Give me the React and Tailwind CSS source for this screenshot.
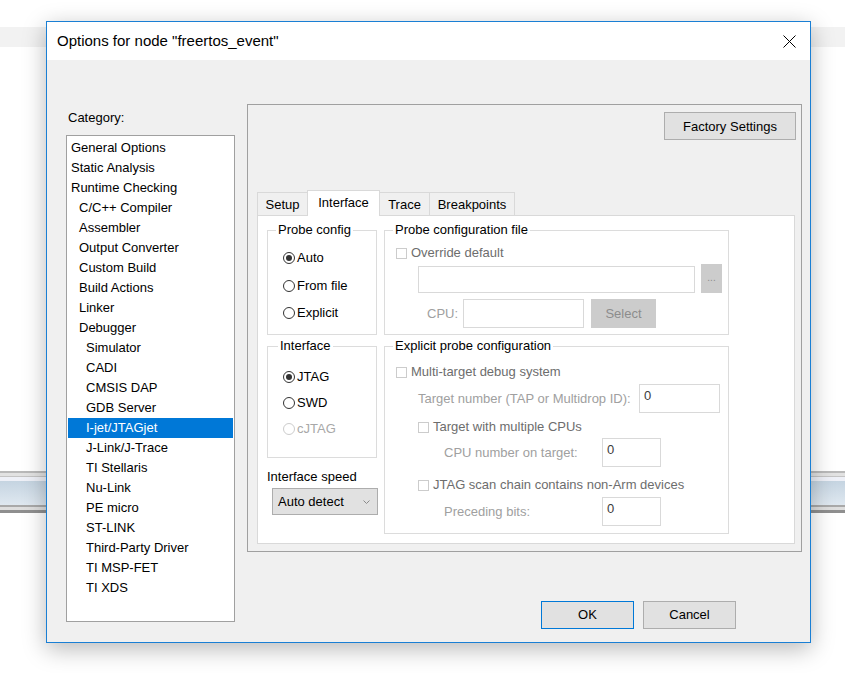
const categories = [
  ['General Options', 0],
  ['Static Analysis', 0],
  ['Runtime Checking', 0],
  ['C/C++ Compiler', 1],
  ['Assembler', 1],
  ['Output Converter', 1],
  ['Custom Build', 1],
  ['Build Actions', 1],
  ['Linker', 1],
  ['Debugger', 1],
  ['Simulator', 2],
  ['CADI', 2],
  ['CMSIS DAP', 2],
  ['GDB Server', 2],
  ['I-jet/JTAGjet', 2],
  ['J-Link/J-Trace', 2],
  ['TI Stellaris', 2],
  ['Nu-Link', 2],
  ['PE micro', 2],
  ['ST-LINK', 2],
  ['Third-Party Driver', 2],
  ['TI MSP-FET', 2],
  ['TI XDS', 2],
];

const indent = ['pl-[3px]', 'pl-[11px]', 'pl-[18px]'];

function Radio({ label, checked, disabled }) {
  return (
    <div className="flex h-4 items-center gap-[2px]">
      <span
        className={`flex h-[12px] w-[12px] items-center justify-center rounded-full border bg-white ${
          disabled ? 'border-[#cccccc]' : 'border-[#333333]'
        }`}
      >
        {checked && <span className="h-[6px] w-[6px] rounded-full bg-[#333333]" />}
      </span>
      <span className={disabled ? 'text-[#a8a8a8]' : 'text-black'}>{label}</span>
    </div>
  );
}

function Check({ label, className = '' }) {
  return (
    <div className={`flex h-4 items-center ${className}`}>
      <span className="mr-[4px] h-[11px] w-[11px] border border-[#cccccc] bg-white" />
      <span className="text-[#6d6d6d]">{label}</span>
    </div>
  );
}

function Group({ label, className = '', legend = 'ml-[8px]', children }) {
  return (
    <fieldset className={`border border-[#dcdcdc] ${className}`}>
      <legend className={`${legend} px-[2px] leading-4`}>{label}</legend>
      {children}
    </fieldset>
  );
}

function Field({ value = '', className = '' }) {
  return (
    <div className={`flex items-center border border-[#d9d9d9] bg-white pl-[4px] text-[#3c3c3c] ${className}`}>
      {value}
    </div>
  );
}

function Tab({ label, active, className = '' }) {
  return active ? (
    <div className={`relative z-10 -mb-px flex h-[26px] items-start justify-center border border-b-0 border-[#d9d9d9] bg-white pt-[4px] ${className}`}>
      {label}
    </div>
  ) : (
    <div className={`flex h-[23px] items-center justify-center border border-b-0 border-[#d9d9d9] bg-[#f0f0f0] pt-px ${className}`}>
      {label}
    </div>
  );
}

export default function App() {
  return (
    <div className="relative h-[673px] w-[845px] overflow-hidden bg-white font-['Liberation_Sans',Arial,sans-serif] text-[13px] leading-4 text-black">
      {/* background windows */}
      <div className="absolute left-0 top-[27px] h-[20px] w-full bg-[#f2f2f2]" />
      <div className="absolute left-0 top-[471px] flex w-full flex-col">
        <div className="h-[2px] bg-[#b9b9b9]" />
        <div className="h-[3px] bg-[#e2e2e2]" />
        <div className="h-px bg-[#c4c4c4]" />
        <div className="h-[4px] bg-[#eef0f7]" />
        <div className="h-[24px] bg-gradient-to-b from-[#c5d4e1] to-[#dfe8f0]" />
        <div className="h-[2px] bg-[#a9a9a9]" />
        <div className="h-[3px] bg-[#dedede]" />
        <div className="h-[3px] bg-[#8f8f8f]" />
      </div>

      {/* dialog */}
      <div className="absolute left-[46px] top-[21px] flex h-[622px] w-[765px] flex-col border border-[#1a7fd4] bg-[#f0f0f0] shadow-[0_6px_22px_rgba(0,0,0,0.28)]">
        <div className="flex h-[38px] items-center justify-between bg-white pl-[10px] pr-[14px]">
          <span className="text-[15px]">Options for node "freertos_event"</span>
          <svg width="13" height="13" viewBox="0 0 13 13" className="text-black">
            <path d="M0.5 0.5 L12.5 12.5 M12.5 0.5 L0.5 12.5" stroke="currentColor" strokeWidth="1" fill="none" />
          </svg>
        </div>

        <div className="flex flex-1">
          {/* category list */}
          <div className="ml-[19px] flex w-[169px] flex-col pt-[50px]">
            <div className="pl-[2px]">Category:</div>
            <div className="mt-[9px] h-[487px] border border-[#a0a0a0] bg-white px-px pt-[2px]">
              {categories.map(([name, level]) => {
                const sel = name === 'I-jet/JTAGjet';
                return (
                  <div
                    key={name}
                    className={`h-5 leading-5 ${indent[level]} ${sel ? 'bg-[#0078d7] text-white' : ''}`}
                  >
                    {name}
                  </div>
                );
              })}
            </div>
          </div>

          {/* right side */}
          <div className="ml-[12px] flex w-[555px] flex-col pt-[44px]">
            <div className="flex h-[448px] flex-col border border-[#a0a0a0]">
              <div className="flex justify-end pr-[5px] pt-[7px]">
                <button className="h-[28px] w-[132px] border border-[#adadad] bg-[#e1e1e1] pt-px">Factory Settings</button>
              </div>

              <div className="ml-[9px] mr-[6px] mt-[50px] flex flex-col">
                <div className="flex h-[25px] items-end">
                  <Tab label="Setup" className="w-[51px]" />
                  <Tab label="Interface" active className="-ml-px w-[73px]" />
                  <Tab label="Trace" className="-ml-px w-[51px]" />
                  <Tab label="Breakpoints" className="-ml-px w-[86px]" />
                </div>

                <div className="flex h-[329px] border border-[#d9d9d9] bg-white pl-[9px] pt-[6px]">
                  {/* left column */}
                  <div className="flex w-[110px] flex-col">
                    <Group label="Probe config" className="h-[113px]">
                      <div className="mt-[12px] flex flex-col gap-[11.5px] pl-[15px]">
                        <Radio label="Auto" checked />
                        <Radio label="From file" />
                        <Radio label="Explicit" />
                      </div>
                    </Group>
                    <Group label="Interface" className="mt-[3px] h-[120px]" legend="ml-[10px]">
                      <div className="mt-[15px] flex flex-col gap-[10px] pl-[15px]">
                        <Radio label="JTAG" checked />
                        <Radio label="SWD" />
                        <Radio label="cJTAG" disabled />
                      </div>
                    </Group>
                    <div className="mt-[11px]">Interface speed</div>
                    <div className="ml-[5px] mt-[3px] flex h-[27px] w-[106px] items-center justify-between border border-[#adadad] bg-[#e1e1e1] pl-[5px] pr-[7px]">
                      <span>Auto detect</span>
                      <svg width="7" height="4" viewBox="0 0 7 4">
                        <path d="M0.5 0.5 L3.5 3.5 L6.5 0.5" stroke="#8a8a8a" strokeWidth="1" fill="none" />
                      </svg>
                    </div>
                  </div>

                  {/* right column */}
                  <div className="ml-[7px] flex w-[345px] flex-col">
                    <Group label="Probe configuration file" className="h-[113px]">
                      <Check label="Override default" className="ml-[11px] mt-[7px]" />
                      <div className="mt-[3px] flex h-[29px] items-end pl-[33px]">
                        <Field className="h-[27px] w-[277px]" />
                        <div className="ml-[6px] flex h-[29px] w-[21px] items-center justify-center bg-[#cccccc] pb-[2px] text-[10px] text-[#8c8c8c]">
                          ...
                        </div>
                      </div>
                      <div className="mt-[6px] flex h-[29px] items-center pl-[42px]">
                        <span className="w-[36px] text-[#a0a0a0]">CPU:</span>
                        <Field className="h-[29px] w-[121px]" />
                        <div className="ml-[7px] flex h-[29px] w-[65px] items-center justify-center bg-[#cccccc] text-[#8c8c8c]">
                          Select
                        </div>
                      </div>
                    </Group>

                    <Group label="Explicit probe configuration" className="mt-[3px] h-[196px]">
                      <Check label="Multi-target debug system" className="ml-[11px] mt-[10px]" />
                      <div className="mt-[4px] flex h-[29px] items-center pl-[33px] pr-[8px]">
                        <span className="text-[#a0a0a0]">Target number (TAP or Multidrop ID):</span>
                        <Field value="0" className="ml-auto h-[29px] w-[81px] items-start pt-[3px]" />
                      </div>
                      <Check label="Target with multiple CPUs" className="ml-[33px] mt-[6px]" />
                      <div className="mt-[3px] flex h-[29px] items-center pl-[59px]">
                        <span className="w-[158px] text-[#a0a0a0]">CPU number on target:</span>
                        <Field value="0" className="h-[29px] w-[59px] items-start pt-[3px]" />
                      </div>
                      <Check label="JTAG scan chain contains non-Arm devices" className="ml-[33px] mt-[10px]" />
                      <div className="mt-[4px] flex h-[29px] items-center pl-[59px]">
                        <span className="w-[158px] text-[#a0a0a0]">Preceding bits:</span>
                        <Field value="0" className="h-[29px] w-[59px] items-start pt-[3px]" />
                      </div>
                    </Group>
                  </div>
                </div>
              </div>
            </div>

            <div className="mt-[49px] flex justify-end gap-[9px] pr-[66px]">
              <button className="h-[28px] w-[93px] border border-[#0078d7] bg-[#e1e1e1]">OK</button>
              <button className="h-[28px] w-[93px] border border-[#adadad] bg-[#e1e1e1]">Cancel</button>
            </div>
          </div>
        </div>
      </div>
    </div>
  );
}
